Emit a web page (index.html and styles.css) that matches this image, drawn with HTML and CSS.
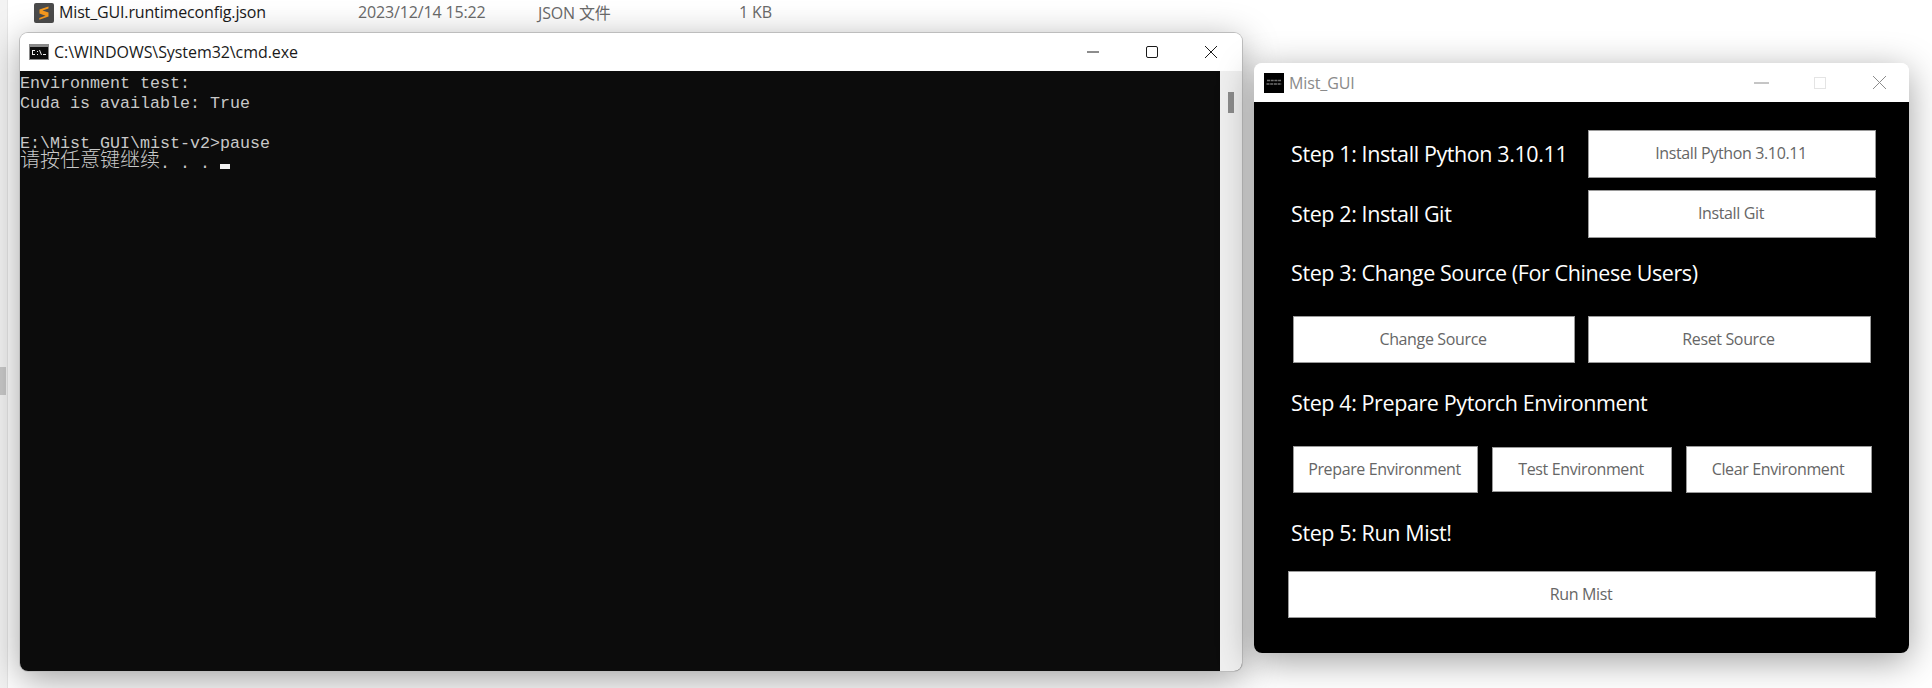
FILE: index.html
```html
<!DOCTYPE html>
<html lang="zh-CN">
<head>
<meta charset="utf-8">
<title>Mist_GUI</title>
<link rel="stylesheet" href="styles.css">
</head>
<body>
<div class="desktop">
  <div class="explorer-edge"></div>
  <div class="explorer-handle"></div>
  <div class="file-row">
    <svg class="file-icon" viewBox="0 0 20 20" aria-hidden="true">
      <rect width="20" height="20" rx="2" fill="#4b4b4b"/>
      <path d="M14.5 3.5 5.5 6.6v4l6 2.1-6.2 2.2v1.8l9.2-3.2V9.400l-6-2 6-2z" fill="#f79a1e"/>
    </svg>
    <span class="file-name">Mist_GUI.runtimeconfig.json</span>
    <span class="file-date">2023/12/14 15:22</span>
    <span class="file-type">JSON 文件</span>
    <span class="file-size">1 KB</span>
  </div>

  <section class="window cmd">
    <header class="titlebar cmd-bar">
      <svg class="cmd-icon" viewBox="0 0 20 16" aria-hidden="true">
        <rect width="20" height="16" fill="#8a8a8a"/>
        <rect x="1" y="3" width="18" height="12" fill="#0c0c0c"/>
        <path d="M3 6h3v1H4v3h2v1H3zM8 7h1v1H8zM8 10h1v1H8zM10 6h1l2 5h-1zM14 10h3v1h-3z" fill="#f0f0f0"/>
      </svg>
      <span class="cmd-title">C:\WINDOWS\System32\cmd.exe</span>
      <div class="controls cmd-controls">
        <svg viewBox="0 0 12 12" aria-hidden="true"><path d="M0 6h12" stroke="#1a1a1a" fill="none"/></svg>
        <svg viewBox="0 0 12 12" aria-hidden="true"><rect x=".5" y=".5" width="11" height="11" rx="1.500" stroke="#1a1a1a" fill="none"/></svg>
        <svg viewBox="0 0 12 12" aria-hidden="true"><path d="M0 0l12 12M12 0 0 12" stroke="#1a1a1a" fill="none"/></svg>
      </div>
    </header>
    <div class="cmd-body">
      <pre class="console">Environment test:
Cuda is available: True

E:\Mist_GUI\mist-v2&gt;pause
<span class="cjk">请按任意键继续</span>. . . <span class="cursor"></span></pre>
      <div class="scrollbar"><div class="thumb"></div></div>
    </div>
  </section>

  <section class="window mist">
    <header class="titlebar mist-bar">
      <svg class="mist-icon" viewBox="0 0 20 20" aria-hidden="true">
        <rect width="20" height="20" fill="#000"/>
        <path d="M3 7.500h14M2.500 11h15" stroke="#6f6f6f" stroke-width="1.500" stroke-dasharray="3 .7" fill="none"/>
      </svg>
      <span class="mist-title">Mist_GUI</span>
      <div class="controls mist-controls">
        <svg class="ctl-min" viewBox="0 0 15 12" aria-hidden="true"><path d="M0 6h15" stroke="#8c8c8c" fill="none"/></svg>
        <svg class="ctl-max" viewBox="0 0 12 12" aria-hidden="true"><rect x=".5" y=".5" width="11" height="11" stroke="#e4e4e4" fill="none"/></svg>
        <svg class="ctl-close" viewBox="0 0 13 13" aria-hidden="true"><path d="M0 0l13 13M13 0 0 13" stroke="#8c8c8c" fill="none"/></svg>
      </div>
    </header>
    <div class="mist-body">
      <div class="row row-first">
        <div class="step step-inline">Step 1: Install Python 3.10.11</div>
        <button class="btn btn-wide">Install Python 3.10.11</button>
      </div>
      <div class="row row-second">
        <div class="step step-inline">Step 2: Install Git</div>
        <button class="btn btn-wide">Install Git</button>
      </div>
      <div class="step step-block step-after-top">Step 3: Change Source (For Chinese Users)</div>
      <div class="row row-pair">
        <button class="btn btn-change">Change Source</button>
        <button class="btn btn-reset">Reset Source</button>
      </div>
      <div class="step step-block">Step 4: Prepare Pytorch Environment</div>
      <div class="row row-triple">
        <button class="btn btn-prepare">Prepare Environment</button>
        <button class="btn btn-test">Test Environment</button>
        <button class="btn btn-clear">Clear Environment</button>
      </div>
      <div class="step step-block">Step 5: Run Mist!</div>
      <button class="btn btn-run">Run Mist</button>
    </div>
  </section>
</div>
</body>
</html>
```
FILE: styles.css
```css
* { box-sizing: border-box; }
html, body { margin: 0; padding: 0; background: #fff; }
.desktop {
  position: relative;
  width: 1932px;
  height: 688px;
  overflow: hidden;
  background: #fff;
  font-family: "Open Sans", "Noto Sans CJK SC", sans-serif;
}
.explorer-edge {
  position: absolute;
  left: 0; top: 0; bottom: 0;
  width: 8px;
  background: #f3f3f3;
  border-right: 1px solid #e6e6e6;
}
.explorer-handle {
  position: absolute;
  left: 0; top: 367px;
  width: 6px; height: 28px;
  background: #c8c8c8;
}
.file-row {
  position: absolute;
  left: 34px; top: 0;
  height: 24px;
  display: flex;
  align-items: center;
  font-size: 16px;
  letter-spacing: -0.15px;
}
.file-icon { width: 20px; height: 20px; flex: none; margin-top: 1px; }
.file-name { margin-left: 5px; width: 299px; color: #1a1a1a; }
.file-date { width: 180px; color: #6a6a6a; }
.file-type { width: 201px; color: #6a6a6a; }
.file-size { color: #6a6a6a; }

.window {
  position: absolute;
  display: flex;
  flex-direction: column;
  border-radius: 8px;
  overflow: hidden;
  box-shadow: 0 8px 36px rgba(0,0,0,.38);
}
.titlebar {
  display: flex;
  align-items: center;
  background: #fff;
  flex: none;
}
.controls { margin-left: auto; display: flex; align-items: center; }

.cmd { left: 20px; top: 33px; width: 1222px; height: 638px; box-shadow: 0 0 0 1px #bdbdbd, 0 8px 36px rgba(0,0,0,.38); }
.cmd-bar { height: 38px; padding-left: 9px; }
.cmd-icon { width: 20px; height: 16px; flex: none; }
.cmd-title { margin-left: 5px; font-size: 16px; color: #1a1a1a; letter-spacing: -0.07px; }
.cmd-controls { gap: 47px; padding-right: 25px; }
.cmd-controls svg { width: 12px; height: 12px; display: block; }
.cmd-body { flex: 1; display: flex; min-height: 0; background: #0c0c0c; }
.console {
  flex: 1;
  margin: 0;
  padding-top: 3px;
  font-family: "Liberation Mono", "Noto Sans CJK SC", monospace;
  font-size: 16.667px;
  line-height: 20px;
  color: #c8c8c8;
  white-space: pre;
}
.cjk { font-family: "Noto Sans CJK SC", sans-serif; font-size: 20px; font-weight: 300; line-height: 0; vertical-align: 1px; }
.cursor { display: inline-block; width: 10px; height: 5px; background: #f2f2f2; vertical-align: -1px; }
.scrollbar { flex: none; width: 22px; background: #efefef; padding: 21px 8px 0 8px; }
.thumb { height: 21px; background: #8b8b8b; }

.mist { left: 1254px; top: 63px; width: 655px; height: 590px; }
.mist-bar { height: 39px; padding-left: 10px; }
.mist-icon { width: 20px; height: 20px; flex: none; }
.mist-title { margin-left: 5px; font-size: 16px; color: #8a8a8a; letter-spacing: -0.1px; }
.mist-controls { padding-right: 23px; }
.ctl-min { width: 15px; height: 12px; }
.ctl-max { width: 12px; height: 12px; margin-left: 45px; }
.ctl-close { width: 13px; height: 13px; margin-left: 47px; }
.mist-body {
  flex: 1;
  background: #000;
  padding: 28px 0 0 39px;
  display: flex;
  flex-direction: column;
  align-items: flex-start;
}
.row { display: flex; align-items: center; flex: none; }
.row-first, .row-second { height: 48px; }
.row-second { margin-top: 12px; }
.row-pair { margin-top: 20px; gap: 13px; height: 47px; }
.row-triple { margin-top: 20px; gap: 14px; height: 47px; }
.step { color: #fff; font-size: 21.500px; letter-spacing: -0.4px; white-space: nowrap; margin-left: -2px; }
.step-inline { width: 297px; padding-bottom: 2px; }
.step-block { height: 46px; line-height: 46px; margin-top: 17px; }
.step-after-top { margin-top: 12px; }
.btn {
  display: block;
  margin: 0;
  padding: 0 2px 2px 0;
  background: #fff;
  border: 1px solid #9a9a9a;
  color: #666;
  font-family: inherit;
  font-size: 16px;
  letter-spacing: -0.36px;
  text-align: center;
  white-space: nowrap;
}
.btn-wide { width: 288px; height: 48px; }
.btn-change { width: 282px; height: 47px; }
.btn-reset { width: 283px; height: 47px; }
.btn-prepare { width: 185px; height: 47px; }
.btn-test { width: 180px; height: 45px; }
.btn-clear { width: 186px; height: 47px; }
.btn-run { width: 588px; height: 47px; margin: 15px 0 0 -5px; }
```
